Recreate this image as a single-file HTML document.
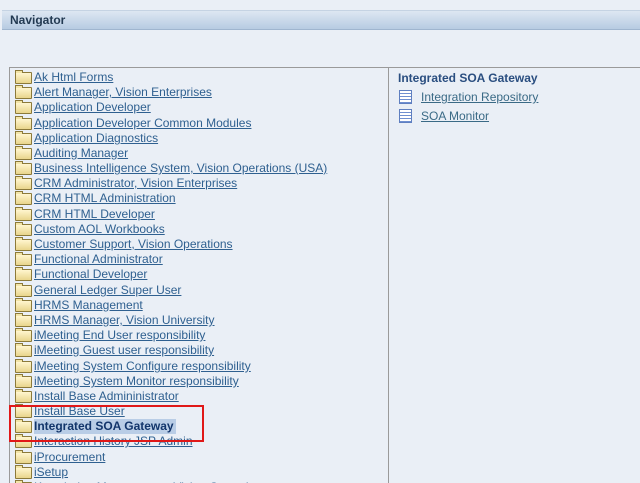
<!DOCTYPE html>
<html style="overflow:hidden;width:640px;height:483px"><head><style>
body{margin:0;width:640px;height:483px;overflow:hidden;background:#eaeff6;font-family:"Liberation Sans",sans-serif;position:relative}
.hdr{position:absolute;left:2px;top:10px;width:638px;height:18px;background:linear-gradient(#dde7f2,#b7cbe2);border-top:1px solid #c5d3e3;border-bottom:1px solid #9fb5cf}
.hdr span{position:absolute;left:8px;top:2px;font-weight:bold;font-size:12px;color:#233a52}
.box{position:absolute;left:9px;top:67px;width:640px;height:420px;border-top:1px solid #9a9a9a;border-left:1px solid #9a9a9a}
.sep{position:absolute;left:388px;top:67px;width:1px;height:420px;background:#9a9a9a}
.row{position:absolute;left:15px;height:15px;font-size:12px;line-height:15px;white-space:nowrap}
.f{position:absolute;left:0;top:2px;width:15px;height:10px;background:linear-gradient(#fff6cf,#e9d58c);border:1px solid #8c7a3a;border-radius:1px}
.f:before{content:"";position:absolute;left:-1px;top:-3px;width:6px;height:2px;background:#f3e5a8;border:1px solid #8c7a3a;border-bottom:none}
.row a{position:absolute;left:19px;top:0;color:#2f6090;text-decoration:underline}
.sel a{font-weight:bold;color:#12356b;background:#b9cde6;text-decoration:none;padding-right:2px}
.red{position:absolute;left:9px;top:405px;width:191px;height:33px;border:2px solid #e01818}
.rt{position:absolute;left:398px;top:71px;font-weight:bold;font-size:12px;color:#2a4e80}
.doc{position:absolute;left:399px;width:11px;height:12px;background:repeating-linear-gradient(#fff 0 2px,#6f8fd0 2px 3px);border:1px solid #5f7fc0}
.rl{position:absolute;left:421px;font-size:12px;color:#3a6a86;text-decoration:underline}
</style></head><body>
<div class="hdr"><span>Navigator</span></div>
<div class="box"></div><div class="sep"></div>
<div class="rt">Integrated SOA Gateway</div>
<div class="doc" style="top:90px"></div><div class="rl" style="top:90px">Integration Repository</div>
<div class="doc" style="top:109px"></div><div class="rl" style="top:109px">SOA Monitor</div>
<div class="row" style="top:70px"><i class="f"></i><a>Ak Html Forms</a></div>
<div class="row" style="top:85px"><i class="f"></i><a>Alert Manager, Vision Enterprises</a></div>
<div class="row" style="top:100px"><i class="f"></i><a>Application Developer</a></div>
<div class="row" style="top:116px"><i class="f"></i><a>Application Developer Common Modules</a></div>
<div class="row" style="top:131px"><i class="f"></i><a>Application Diagnostics</a></div>
<div class="row" style="top:146px"><i class="f"></i><a>Auditing Manager</a></div>
<div class="row" style="top:161px"><i class="f"></i><a>Business Intelligence System, Vision Operations (USA)</a></div>
<div class="row" style="top:176px"><i class="f"></i><a>CRM Administrator, Vision Enterprises</a></div>
<div class="row" style="top:191px"><i class="f"></i><a>CRM HTML Administration</a></div>
<div class="row" style="top:207px"><i class="f"></i><a>CRM HTML Developer</a></div>
<div class="row" style="top:222px"><i class="f"></i><a>Custom AOL Workbooks</a></div>
<div class="row" style="top:237px"><i class="f"></i><a>Customer Support, Vision Operations</a></div>
<div class="row" style="top:252px"><i class="f"></i><a>Functional Administrator</a></div>
<div class="row" style="top:267px"><i class="f"></i><a>Functional Developer</a></div>
<div class="row" style="top:283px"><i class="f"></i><a>General Ledger Super User</a></div>
<div class="row" style="top:298px"><i class="f"></i><a>HRMS Management</a></div>
<div class="row" style="top:313px"><i class="f"></i><a>HRMS Manager, Vision University</a></div>
<div class="row" style="top:328px"><i class="f"></i><a>iMeeting End User responsibility</a></div>
<div class="row" style="top:343px"><i class="f"></i><a>iMeeting Guest user responsibility</a></div>
<div class="row" style="top:359px"><i class="f"></i><a>iMeeting System Configure responsibility</a></div>
<div class="row" style="top:374px"><i class="f"></i><a>iMeeting System Monitor responsibility</a></div>
<div class="row" style="top:389px"><i class="f"></i><a>Install Base Admininistrator</a></div>
<div class="row" style="top:404px"><i class="f"></i><a>Install Base User</a></div>
<div class="row sel" style="top:419px"><i class="f"></i><a>Integrated SOA Gateway</a></div>
<div class="row" style="top:434px"><i class="f"></i><a>Interaction History JSP Admin</a></div>
<div class="row" style="top:450px"><i class="f"></i><a>iProcurement</a></div>
<div class="row" style="top:465px"><i class="f"></i><a>iSetup</a></div>
<div class="row" style="top:480px"><i class="f"></i><a>Knowledge Management, Vision Operations</a></div>
<div class="red"></div>
</body></html>
